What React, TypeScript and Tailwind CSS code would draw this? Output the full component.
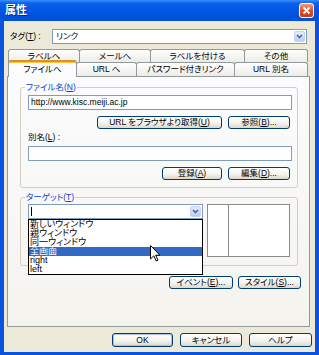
import React from "react";

const btn =
  "flex items-center justify-center rounded-[3px] border border-[#003C74] bg-[linear-gradient(#ffffff,#f4f3ef_55%,#dcd7cb)] text-[8.5px] leading-none text-black whitespace-nowrap";

function Key({ c }: { c: string }) {
  return <span className="underline underline-offset-[1px]">{c}</span>;
}

function Arrow() {
  return (
    <div className="mr-px flex h-[11px] w-[11px] items-center justify-center rounded-[2px] border border-[#c3d3fd] bg-[linear-gradient(#e3ebfd,#b9cbf5)]">
      <svg width="7" height="5" viewBox="0 0 7 5">
        <path d="M1 1 L3.5 3.5 L6 1" fill="none" stroke="#4d6185" strokeWidth="1.5" />
      </svg>
    </div>
  );
}

const row1 = [
  { label: "ラベルへ", w: "w-[72px]" },
  { label: "メールへ", w: "w-[72px]" },
  { label: "ラベルを付ける", w: "w-[95px]" },
  { label: "その他", w: "w-[64px]" },
];

const row2 = [
  { label: "URL へ", w: "w-[61px]" },
  { label: "パスワード付きリンク", w: "w-[99px]" },
  { label: "URL 別名", w: "w-[74px]" },
];

const targets = ["新しいウィンドウ", "親ウィンドウ", "同一ウィンドウ", "全画面", "right", "left"];

const tabCls =
  "-ml-px flex items-center justify-center rounded-t-[3px] border border-b-0 border-[#919B9C] bg-[linear-gradient(#ffffff,#ecebe6)] text-[8.5px] leading-none";

export default function App() {
  return (
    <div className="relative flex h-[355px] w-[319px] flex-col overflow-hidden bg-[#0a53df] text-black [font-family:'Liberation_Sans','Noto_Sans_CJK_JP',sans-serif] [font-feature-settings:'palt']">
      {/* title bar */}
      <div className="flex h-[21px] items-center justify-between bg-[linear-gradient(#3d8ffb_0%,#0a60ea_15%,#0056e4_55%,#004fd6_100%)] pl-[5px] pr-[5px]">
        <span className="text-[11px] font-bold leading-none text-white [text-shadow:1px_1px_0_#0a2a8a]">
          属性
        </span>
        <div className="flex h-[15px] w-[15px] items-center justify-center rounded-[3px] border border-white bg-[linear-gradient(#ee9a7c,#dc4b25_55%,#c43c1a)]">
          <svg width="9" height="9" viewBox="0 0 9 9">
            <path d="M1.5 1.5 L7.5 7.5 M7.5 1.5 L1.5 7.5" stroke="white" strokeWidth="1.8" />
          </svg>
        </div>
      </div>

      {/* client area */}
      <div className="mx-[4px] mb-[3px] flex flex-1 flex-col bg-[#ECE9D8]">
        <div className="ml-[6px] mr-[8px] mt-[8px] flex h-[15px] items-center">
          <span className="w-[42px] text-[8.5px] leading-none">
            タグ(<Key c="T" />) :
          </span>
          <div className="flex h-[15px] flex-1 items-center border border-[#7F9DB9] bg-white">
            <span className="flex-1 pl-[3px] text-[8.5px] leading-none">リンク</span>
            <Arrow />
          </div>
        </div>

        {/* tabs */}
        <div className="ml-[5px] mt-[5px] flex h-[13px]">
          {row1.map((t) => (
            <div key={t.label} className={`${tabCls} ${t.w} h-[13px]`}>
              {t.label}
            </div>
          ))}
        </div>
        <div className="relative z-10 ml-[5px] flex h-[14px] items-end">
          <div className="-mb-px -ml-px flex h-[17px] w-[69px] items-center justify-center rounded-t-[3px] border-x border-t-2 border-x-[#919B9C] border-t-[#E68B2C] bg-[#FCFCFE] text-[8.5px] leading-none shadow-[inset_0_1px_0_#FFC73C]">
            ファイルへ
          </div>
          {row2.map((t) => (
            <div key={t.label} className={`${tabCls} ${t.w} h-[14px]`}>
              {t.label}
            </div>
          ))}
        </div>

        {/* page */}
        <div className="ml-[3px] mr-[5px] flex h-[251px] flex-col border border-[#919B9C] bg-[linear-gradient(#fcfcfe,#f4f3ee)]">
          <fieldset className="ml-[12px] mr-[11px] mt-[6px] rounded-[3px] border border-[#D0D0BF] px-0">
            <legend className="ml-[4px] px-[1px] text-[8.5px] leading-[9px] text-[#0046D5]">
              ファイル名(<Key c="N" />)
            </legend>
            <div className="flex flex-col pb-[7px] pl-[7px] pr-[5px] pt-[3px]">
              <div className="flex h-[15px] items-center border border-[#7F9DB9] bg-white pl-[2px] text-[8.5px] leading-none">
                http://www.kisc.meiji.ac.jp
              </div>
              <div className="mr-[2px] mt-[6px] flex justify-end gap-[6px]">
                <div className={`${btn} h-[13px] w-[125px]`}>
                  URL をブラウザより取得(<Key c="U" />)
                </div>
                <div className={`${btn} h-[13px] w-[62px]`}>
                  参照(<Key c="B" />)...
                </div>
              </div>
              <div className="mt-[3px] h-[11px] text-[8.5px] leading-[11px]">
                別名(<Key c="L" />) :
              </div>
              <div className="mt-[3px] h-[15px] border border-[#7F9DB9] bg-white" />
              <div className="mr-[2px] mt-[6px] flex justify-end gap-[6px]">
                <div className={`${btn} h-[13px] w-[60px]`}>
                  登録(<Key c="A" />)
                </div>
                <div className={`${btn} h-[13px] w-[62px]`}>
                  編集(<Key c="D" />)...
                </div>
              </div>
            </div>
          </fieldset>

          <fieldset className="ml-[12px] mr-[11px] mt-[5px] rounded-[3px] border border-[#D0D0BF] px-0">
            <legend className="ml-[4px] px-[1px] text-[8.5px] leading-[9px] text-[#0046D5]">
              ターゲット(<Key c="T" />)
            </legend>
            <div className="flex items-start gap-[4px] pb-[8px] pl-[7px] pr-[7px] pt-[2px]">
              <div className="relative z-20 w-[175px]">
                <div className="flex h-[15px] items-center border border-[#7F9DB9] bg-white">
                  <div className="flex-1 pl-[2px]">
                    <div className="h-[9px] w-px bg-black" />
                  </div>
                  <Arrow />
                </div>
                <div className="absolute left-0 top-full w-full border border-black bg-white">
                  {targets.map((t) => (
                    <div
                      key={t}
                      className={`h-[9px] px-px text-[9px] leading-[9px] ${
                        t === "全画面" ? "bg-[#316AC5] text-white" : ""
                      }`}
                    >
                      {t}
                    </div>
                  ))}
                </div>
              </div>
              <div className="flex h-[53px] w-[83px] border border-[#8b8b8b] bg-white">
                <div className="w-[21px] border-r border-[#8b8b8b]" />
              </div>
            </div>
          </fieldset>

          <div className="mr-[8px] mt-[10px] flex justify-end gap-[5px]">
            <div className={`${btn} h-[13px] w-[64px]`}>
              イベント(<Key c="E" />)...
            </div>
            <div className={`${btn} h-[13px] w-[63px]`}>
              スタイル(<Key c="S" />)...
            </div>
          </div>
        </div>

        {/* dialog buttons */}
        <div className="mr-[3px] mt-[6px] flex justify-end gap-[7px]">
          <div className={`${btn} h-[14px] w-[61px] shadow-[inset_0_0_0_1px_#a9bff0]`}>OK</div>
          <div className={`${btn} h-[14px] w-[62px]`}>キャンセル</div>
          <div className={`${btn} h-[14px] w-[63px]`}>ヘルプ</div>
        </div>
      </div>

      {/* mouse pointer */}
      <svg className="absolute left-[150px] top-[245px] z-30" width="11" height="17" viewBox="0 0 11 17">
        <path
          d="M0.5 0.5 V14 L3.8 10.8 L6.2 16 L8 15.2 L5.7 10.2 H10 Z"
          fill="white"
          stroke="black"
          strokeWidth="1"
        />
      </svg>
    </div>
  );
}
